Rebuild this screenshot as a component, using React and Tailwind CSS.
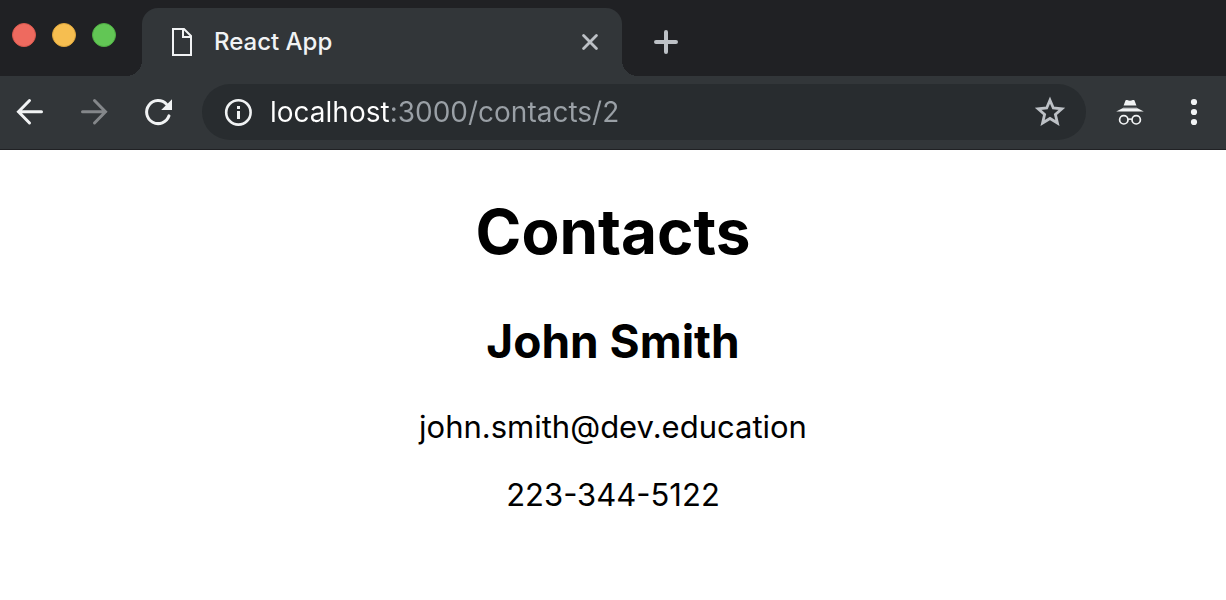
import React, { useState } from 'react';

const BackIcon = () => (
  <svg width="40" height="40" viewBox="0 0 40 40" fill="none" stroke="currentColor" strokeWidth="3" strokeLinecap="round">
    <path d="M31.5 19.8H8.5M19.5 8.5L8.5 19.8L19.5 31" />
  </svg>
);

const ForwardIcon = () => (
  <svg width="40" height="40" viewBox="0 0 40 40" fill="none" stroke="currentColor" strokeWidth="3" strokeLinecap="round">
    <path d="M8.5 19.8H31.5M20.5 8.5L31.5 19.8L20.5 31" />
  </svg>
);

const ReloadIcon = () => (
  <svg width="40" height="40" viewBox="0 0 40 40" fill="none">
    <path d="M31 23.8A11.5 11.5 0 1 1 28.5 12.2" stroke="currentColor" strokeWidth="3" strokeLinecap="round" />
    <path d="M34 7.2V18H23.2Z" fill="currentColor" />
  </svg>
);

const FileIcon = () => (
  <svg width="20" height="28" viewBox="0 0 20 28" fill="none" stroke="currentColor" strokeWidth="2">
    <path d="M1 1H12L19 8V27H1Z" />
    <path d="M11 1V9H19" />
  </svg>
);

const InfoIcon = () => (
  <svg width="28" height="28" viewBox="0 0 28 28" fill="none">
    <circle cx="14.4" cy="14.4" r="12.2" stroke="currentColor" strokeWidth="2.6" />
    <path d="M13 8h3v3h-3zM13 13h3v8h-3z" fill="currentColor" />
  </svg>
);

const StarIcon = () => (
  <svg width="32" height="32" viewBox="0 0 32 32" fill="none" stroke="currentColor" strokeWidth="2.8">
    <path d="M16 4.2L19.3 12L27.8 12.8L21.4 18.4L23.4 27L16 22.5L8.6 27L10.6 18.4L4.2 12.8L12.7 12Z" />
  </svg>
);

const IncognitoIcon = () => (
  <svg width="40" height="40" viewBox="0 0 40 40" fill="none">
    <path d="M15.6 8.3Q16.2 7.7 17.2 8.1Q20 9.2 22.8 8.1Q23.8 7.7 24.4 8.3L26.4 13.4H13.6Z" fill="currentColor" />
    <path d="M13 15.4H27" stroke="currentColor" strokeOpacity="0.3" />
    <path d="M12.5 16.2H27.5L33.8 19.6H6.2Z" fill="currentColor" />
    <g stroke="currentColor" strokeWidth="1.7">
      <circle cx="13.8" cy="27.8" r="4.2" />
      <circle cx="26.2" cy="27.8" r="4.2" />
      <path d="M18 27.6Q20 26.4 22 27.6" />
    </g>
  </svg>
);

const MenuIcon = () => (
  <svg width="40" height="40" viewBox="0 0 40 40" fill="currentColor">
    <circle cx="20" cy="10" r="3.1" />
    <circle cx="20" cy="20" r="3.1" />
    <circle cx="20" cy="30" r="3.1" />
  </svg>
);

const TabStrip = () => (
  <div className="flex h-[76px] bg-[#202124] pt-2 pl-3">
    <div className="flex gap-4 pt-[15px]">
      <button aria-label="Close window" className="size-6 rounded-full bg-[#ee6a5f] border border-[#d9594e]" />
      <button aria-label="Minimize window" className="size-6 rounded-full bg-[#f6be50] border border-[#dea63c]" />
      <button aria-label="Zoom window" className="size-6 rounded-full bg-[#62c655] border border-[#4fae43]" />
    </div>

    <div className="relative ml-[26px] flex w-[480px] items-center rounded-t-2xl bg-[#323639] pr-5 pl-[30px] text-[#f1f3f4]">
      <span className="absolute right-full bottom-0 size-4 bg-[radial-gradient(circle_at_0_0,transparent_16px,#323639_16px)]" />
      <FileIcon />
      <span className="ml-[22px] flex-1 text-2xl font-medium">React App</span>
      <button aria-label="Close tab" className="flex size-6 items-center justify-center text-[#bdc1c6]">
        <svg width="16" height="16" viewBox="0 0 16 16" fill="none" stroke="currentColor" strokeWidth="2.8" strokeLinecap="round">
          <path d="M1.6 1.6L14.4 14.4M14.4 1.6L1.6 14.4" />
        </svg>
      </button>
      <span className="absolute bottom-0 left-full size-4 bg-[radial-gradient(circle_at_100%_0,transparent_16px,#323639_16px)]" />
    </div>

    <button aria-label="New tab" className="ml-8 text-[#bdc1c6]">
      <svg width="24" height="24" viewBox="0 0 24 24" fill="none" stroke="currentColor" strokeWidth="4" strokeLinecap="round">
        <path d="M12 2V22M2 12H22" />
      </svg>
    </button>
  </div>
);

const Toolbar = () => {
  const [url, setUrl] = useState('localhost:3000/contacts/2');

  return (
    <div className="flex h-[74px] items-start gap-6 border-b border-[#202124] bg-[#323639] pt-2 pr-3 pl-[10px] text-[#f1f3f4]">
      <div className="flex h-14 items-center gap-6">
        <button aria-label="Back"><BackIcon /></button>
        <button aria-label="Forward" className="text-[#84878a]"><ForwardIcon /></button>
        <button aria-label="Reload"><ReloadIcon /></button>
      </div>

      <div className="flex h-14 flex-1 items-center rounded-full bg-[#282c2f] pr-5 pl-[22px]">
        <button aria-label="Site information"><InfoIcon /></button>
        {/* the host is brighter than the rest of the address */}
        <input
          type="text"
          aria-label="Address"
          spellCheck={false}
          className="ml-[18px] min-w-0 flex-1 bg-[linear-gradient(to_right,#ffffff_119px,#9aa0a6_119px)] bg-clip-text text-[28px] leading-9 text-transparent caret-white outline-none"
          value={url}
          onChange={(e) => setUrl(e.target.value)}
        />
        <button aria-label="Bookmark this page" className="text-[#bdc1c6]"><StarIcon /></button>
      </div>

      <div className="flex h-14 items-center gap-6">
        <button aria-label="Incognito"><IncognitoIcon /></button>
        <button aria-label="Menu"><MenuIcon /></button>
      </div>
    </div>
  );
};

const Contact = ({ name, email, phone }) => (
  <section>
    <h2 className="mt-[43px] text-[46px] leading-14 font-bold">{name}</h2>
    <p className="mt-10 text-[31px] leading-9">{email}</p>
    <p className="mt-8 text-[31px] leading-9">{phone}</p>
  </section>
);

const App = () => {
  return (
    <div className="min-h-screen bg-white font-['Inter',sans-serif]">
      <header>
        <TabStrip />
        <Toolbar />
      </header>
      <main className="pt-11 text-center text-black">
        <h1 className="text-[62px] leading-[76px] font-bold">Contacts</h1>
        <Contact name="John Smith" email="john.smith@dev.education" phone="223-344-5122" />
      </main>
    </div>
  );
};

export default App;
